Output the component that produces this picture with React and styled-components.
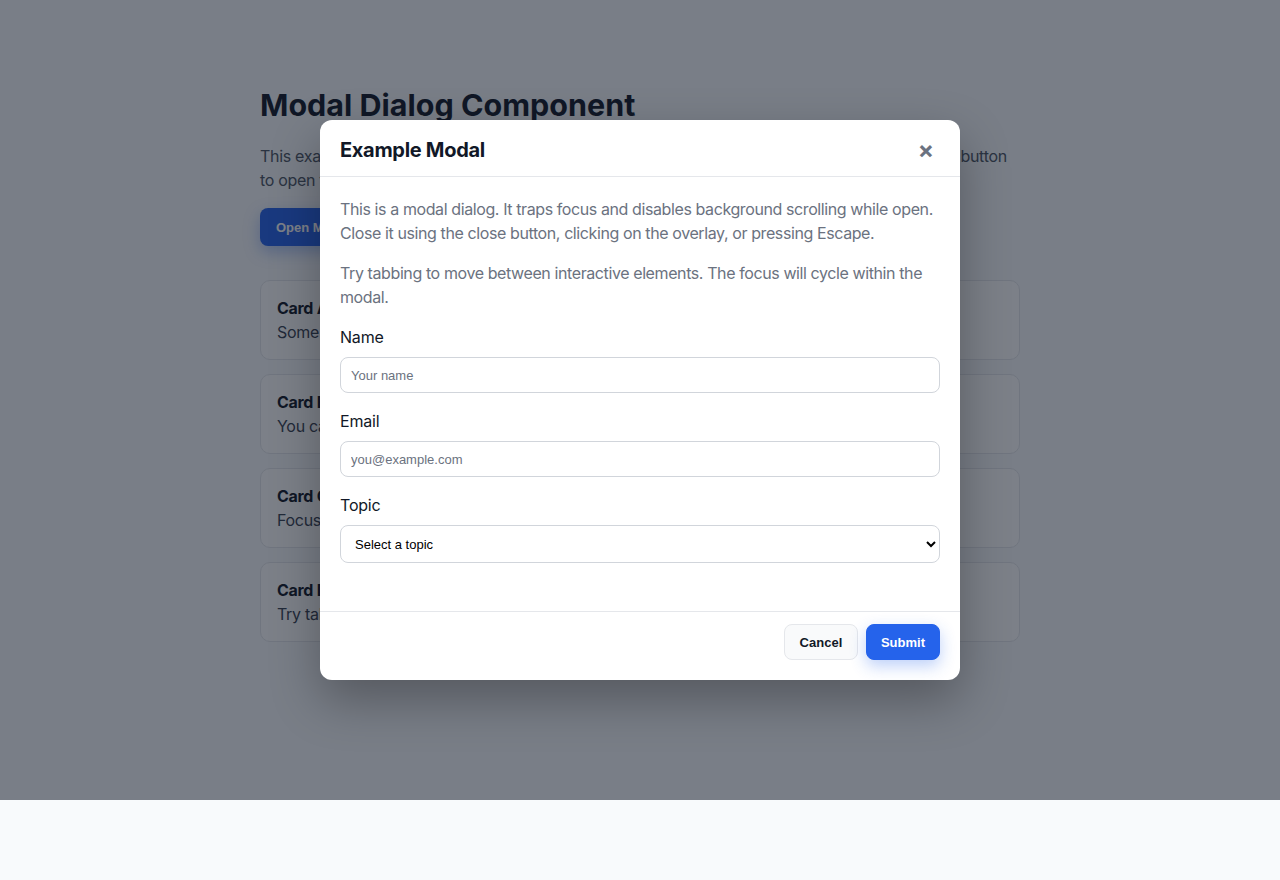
import React from "react";
import styled, { createGlobalStyle } from "styled-components";

const Global = createGlobalStyle`
  html, body { margin: 0; padding: 0; }
  body {
    background: #f8fafc;
    font-family: Inter, "Noto Sans", sans-serif;
    color: #111827;
    -webkit-font-smoothing: antialiased;
  }
  * { box-sizing: border-box; }
`;

const Shell = styled.div`
  position: relative;
  height: 800px;
  overflow: hidden;
`;

const Page = styled.main`
  max-width: 760px;
  margin: 0 auto;
  padding: 84px 0 0;
`;

const Title = styled.h1`
  margin: 0 0 18px;
  font-size: 30.5px;
  line-height: 42px;
  font-weight: 700;
  letter-spacing: 0;
  color: #111827;
`;

const Lead = styled.p`
  margin: 0 0 16px;
  font-size: 16px;
  line-height: 24px;
  letter-spacing: -0.3px;
  color: #4b5563;
`;

const OpenButton = styled.button`
  height: 38px;
  padding: 0 16px;
  border: none;
  border-radius: 8px;
  background: #2563eb;
  color: #fff;
  font-family: "Liberation Sans", Arial, sans-serif;
  font-weight: 700;
  font-size: 13px;
  box-shadow: 0 6px 16px rgba(37, 99, 235, 0.35);
`;

const CardList = styled.div`
  display: flex;
  flex-direction: column;
  gap: 14px;
  margin-top: 34px;
`;

const Card = styled.div`
  height: 80px;
  padding: 15px 16px;
  background: #fff;
  border: 1px solid #e5e7eb;
  border-radius: 10px;
  font-size: 16px;
  line-height: 24px;
  letter-spacing: -0.3px;
`;

const CardTitle = styled.div`
  font-weight: 700;
  color: #111827;
`;

const CardText = styled.div`
  color: #374151;
`;

const Overlay = styled.div`
  position: absolute;
  inset: 0;
  background: rgba(17, 24, 39, 0.55);
  display: flex;
  justify-content: center;
  padding-top: 120px;
`;

const Modal = styled.div`
  width: 640px;
  height: 560px;
  background: #fff;
  border-radius: 12px;
  box-shadow: 0 20px 50px rgba(0, 0, 0, 0.3);
  display: flex;
  flex-direction: column;
  overflow: hidden;
`;

const Header = styled.div`
  display: flex;
  align-items: center;
  justify-content: space-between;
  height: 57px;
  padding: 3px 20px 0;
  border-bottom: 1px solid #e5e7eb;
`;

const ModalTitle = styled.h2`
  margin: 0;
  font-size: 20px;
  line-height: 24px;
  font-weight: 700;
  color: #111827;
  letter-spacing: -0.3px;
`;

const CloseButton = styled.button`
  width: 30px;
  height: 30px;
  padding: 0;
  margin-right: -1px;
  border: none;
  background: transparent;
  color: #6b7280;
  font-family: Inter, sans-serif;
  font-size: 24px;
  font-weight: 700;
  line-height: 1;
  display: flex;
  align-items: center;
  justify-content: center;
`;

const Body = styled.div`
  flex: 1;
  padding: 20px 20px 0;
`;

const Text = styled.p`
  margin: 0 0 16px;
  font-size: 16px;
  line-height: 24px;
  letter-spacing: -0.4px;
  color: #6b7280;
`;

const Field = styled.div`
  display: flex;
  flex-direction: column;
  gap: 8px;
  margin-bottom: 16px;
`;

const Label = styled.label`
  font-size: 16px;
  line-height: 24px;
  letter-spacing: -0.2px;
  color: #111827;
`;

const Input = styled.input`
  height: 36px;
  padding: 0 10px;
  border: 1px solid #d1d5db;
  border-radius: 8px;
  font-family: "Liberation Sans", Arial, sans-serif;
  font-size: 13px;
  color: #111827;
  background: #fff;
  &::placeholder { color: #6b7280; }
`;

const Select = styled.select`
  height: 38px;
  padding: 0 10px;
  border: 1px solid #d1d5db;
  border-radius: 8px;
  font-family: "Liberation Sans", Arial, sans-serif;
  font-size: 13px;
  color: #000;
  background: #fff;
`;

const Footer = styled.div`
  display: flex;
  justify-content: flex-end;
  gap: 8px;
  padding: 12px 20px 20px;
  border-top: 1px solid #e5e7eb;
`;

const ActionButton = styled.button`
  height: 36px;
  padding: 0 14px;
  min-width: 74px;
  border-radius: 8px;
  font-family: "Liberation Sans", Arial, sans-serif;
  font-size: 13px;
  font-weight: 700;
  border: 1px solid ${(p) => (p.$primary ? "#2563eb" : "#e5e7eb")};
  background: ${(p) => (p.$primary ? "#2563eb" : "#f9fafb")};
  color: ${(p) => (p.$primary ? "#ffffff" : "#111827")};
  box-shadow: ${(p) => (p.$primary ? "0 6px 16px rgba(37, 99, 235, 0.3)" : "none")};
`;

const cards = [
  ["Card A", "Some content behind the modal to demonstrate background scrolling."],
  ["Card B", "You can't interact with this while the modal is open."],
  ["Card C", "Focus stays trapped inside the dialog until it is closed."],
  ["Card D", "Try tabbing through the page once the modal is dismissed."],
];

export default function App() {
  return (
    <>
      <Global />
      <Shell>
        <Page>
          <Title>Modal Dialog Component</Title>
          <Lead>
            This example shows an accessible modal dialog with a focus trap and Escape support. Click the button
            to open the modal and try closing it in different ways.
          </Lead>
          <OpenButton>Open Modal</OpenButton>
          <CardList>
            {cards.map(([t, d]) => (
              <Card key={t}>
                <CardTitle>{t}</CardTitle>
                <CardText>{d}</CardText>
              </Card>
            ))}
          </CardList>
        </Page>
        <Overlay>
          <Modal role="dialog" aria-modal="true">
            <Header>
              <ModalTitle>Example Modal</ModalTitle>
              <CloseButton aria-label="Close">×</CloseButton>
            </Header>
            <Body>
              <Text>
                This is a modal dialog. It traps focus and disables background scrolling while open. Close it using the
                close button, clicking on the overlay, or pressing Escape.
              </Text>
              <Text>
                Try tabbing to move between interactive elements. The focus will cycle within the modal.
              </Text>
              <Field>
                <Label>Name</Label>
                <Input placeholder="Your name" />
              </Field>
              <Field>
                <Label>Email</Label>
                <Input placeholder="you@example.com" />
              </Field>
              <Field>
                <Label>Topic</Label>
                <Select defaultValue="">
                  <option value="">Select a topic</option>
                  <option value="general">General</option>
                  <option value="support">Support</option>
                </Select>
              </Field>
            </Body>
            <Footer>
              <ActionButton>Cancel</ActionButton>
              <ActionButton $primary>Submit</ActionButton>
            </Footer>
          </Modal>
        </Overlay>
      </Shell>
    </>
  );
}
